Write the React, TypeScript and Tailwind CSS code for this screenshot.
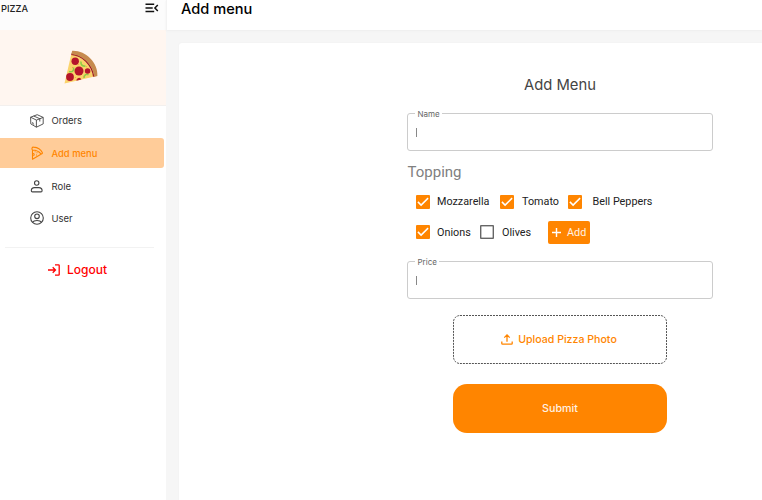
import React from "react";

type IconProps = { className?: string };

const PizzaLogo = ({ className }: IconProps) => (
  <svg className={className} width="36" height="36" viewBox="0 0 36 36" fill="none">
    <path d="M8.2 4.5C19 5.5 28.5 15 30.5 26.8L1.500 33.500Z" fill="#fbd36b" />
    <path d="M8.3 4.2C19.5 5 29 14.5 30.8 26.6" stroke="#9d1422" strokeWidth="1.5" />
    <path d="M9.2.8C22.5.2 35.2 12.5 34.400 26l-3.200.9C30 15 20 5 8.2 4.2Z" fill="#c68a4e" />
    <path d="M18 11.5c-.5 3 1.5 5 4.500 4.500M10.500 17.500c.8 3-1 5-4.500 4M21 28c0-3 2-4.500 4.500-3.200" stroke="#8fce45" strokeWidth="1.6" />
    <circle cx="12.200" cy="11.300" r="3.700" fill="#b5152b" />
    <circle cx="16" cy="21" r="4.500" fill="#b5152b" />
    <circle cx="24.600" cy="21" r="2.800" fill="#b5152b" />
    <circle cx="7" cy="27" r="3.900" fill="#b5152b" />
    <path d="M13.400 30.700a2.600 2.600 0 0 1 5-1.200Z" fill="#b5152b" />
    <path d="m9 17 .8.8M20 26l.8.5M23 17l.7-.5M12 28l.6-.8M15 15l.5-.7" stroke="#f59b35" />
  </svg>
);

const MenuFold = () => (
  <svg width="14" height="10" viewBox="0 0 14 10" fill="none" stroke="#111" strokeWidth="1.5">
    <path d="M.5 1.250h8.700M.5 4.900h7.200M.5 8.600h8.700M12.800 2 9.900 4.900l2.900 3" />
  </svg>
);

const BoxIcon = () => (
  <svg width="14" height="14" viewBox="0 0 14 14" fill="none" stroke="#444" strokeWidth="0.9" strokeLinejoin="round">
    <path d="M.6 3.200 7.200.7l6 2.700v6.500L6.400 13.200.8 9.900ZM.6 3.200l5.800 2.900 6.800-2.700M6.400 6.100v7.100M3.700 2 9.800 4.700v2.800M2.700 8.200v1.300l1.400.8" />
  </svg>
);

const SliceIcon = () => (
  <svg width="14" height="14" viewBox="0 0 14 14" fill="none" stroke="#ff8500" strokeWidth="1.100" strokeLinejoin="round">
    <path d="M2.500 4v9.200l9.300-5.500M2.500 4C1.400 3 1.900.9 3.600 1.100c4.200.4 7.400 2.700 8.700 5.300.5 1.200-.4 1.800-1.400 1.400C9.100 5.500 6.300 4.200 2.500 4Z" />
    <path d="M2.700 7.500c1.500-.2 2.200 1.500.6 2.300M6.500 6.800h1M4.700 5.700h.8M6 9h1" />
  </svg>
);

const RoleIcon = () => (
  <svg width="14" height="13" viewBox="0 0 14 13" fill="none" stroke="#444" strokeWidth="1.100">
    <circle cx="6.700" cy="3" r="2.200" />
    <path d="M1.300 10.800c0-2.200 1.500-3.200 3.200-3.200h4.400c1.800 0 3.200 1 3.200 3.200 0 .7-.5 1.100-1.100 1.100H2.400c-.6 0-1.100-.4-1.100-1.100Z" />
  </svg>
);

const UserIcon = () => (
  <svg width="14" height="14" viewBox="0 0 14 14" fill="none" stroke="#444" strokeWidth="1.100">
    <circle cx="7" cy="7" r="6.300" />
    <circle cx="7" cy="5.300" r="2.300" />
    <path d="M2.600 11.300C3.400 9.800 5 9.500 7 9.500s3.600.3 4.400 1.800" />
  </svg>
);

const LogoutIcon = () => (
  <svg width="12" height="12" viewBox="0 0 12 12" fill="none" stroke="#f00" strokeWidth="1.300">
    <path d="M0 6h7.400M4.700 3.200 7.500 6 4.700 8.800M7 .8h3.500q.7 0 .7.7v9q0 .7-.7.7H7" />
  </svg>
);

const UploadIcon = () => (
  <svg width="12" height="11" viewBox="0 0 12 11" fill="none" stroke="#ff8500" strokeWidth="1.300">
    <path d="M6 7.700V1.100M3.300 3.600 6 .9l2.700 2.700M.8 7.400v2q0 .7.700.7h9q.7 0 .7-.7v-2" />
  </svg>
);

const Checkbox = ({ checked = true }: { checked?: boolean }) => (
  <span className={`flex h-3.5 w-3.5 shrink-0 items-center justify-center rounded-[1px] ${checked ? "bg-[#ff8500]" : "bg-[#666]"}`}>
    {checked ? (
      <svg width="12" height="10" viewBox="0 0 12 10" fill="none" stroke="white" strokeWidth="1.500">
        <path d="m.9 4.900 3.200 3.200 7-7" />
      </svg>
    ) : (
      <svg width="14" height="14" viewBox="0 0 14 14"><path d="M1.400 1.400h11.200v11.200H1.400z" fill="white" /></svg>
    )}
  </span>
);

const NavItem = ({ icon, label, className = "" }: { icon: React.ReactNode; label: string; className?: string }) => (
  <div className={`flex items-center pl-[30px] ${className}`}>
    <span className="flex w-[21.500px] shrink-0">{icon}</span>
    <span className="pt-[2px]">{label}</span>
  </div>
);

const Field = ({ label }: { label: string }) => (
  <div className="relative flex h-[38px] w-[306px] items-center rounded-[3px] border border-[#ccc] pl-2">
    <span className="absolute -top-[6px] left-[7px] bg-white px-[2.500px] text-[8px] leading-[12px] text-[#666]">{label}</span>
    <span className="h-[9px] w-px bg-[#888]" />
  </div>
);

export default function App() {
  return (
    <div className="flex h-[500px] w-[762px] overflow-hidden bg-[#f6f6f6] font-['Inter',sans-serif]">
      <aside className="h-full w-[166px] shrink-0 bg-white">
        <div className="flex h-[30px] justify-between bg-[#fcfcfc] pl-px pr-[7px]">
          <span className="pt-[3px] text-[9.300px] leading-[12px] font-medium text-[#222]">PIZZA</span>
          <span className="pt-[2.500px]"><MenuFold /></span>
        </div>
        <div className="h-[76px] border-b border-[#f3f0ee] bg-[#fff6f0] pt-5 pl-[62.500px]">
          <PizzaLogo />
        </div>
        <nav className="text-[9.500px] text-[#333]">
          <NavItem icon={<BoxIcon />} label="Orders" className="h-[29px]" />
          <div className="pt-[3px]">
            <NavItem icon={<SliceIcon />} label="Add menu" className="h-[30px] w-[164px] rounded-r-[3px] bg-[#ffcc99] text-[9.400px] font-medium text-[#ff8500]" />
          </div>
          <NavItem icon={<RoleIcon />} label="Role" className="mt-[2px] h-[32px]" />
          <NavItem icon={<UserIcon />} label="User" className="h-[32px]" />
        </nav>
        <div className="mt-[13px] ml-[5px] w-[149px] border-t border-[#f2f2f2]" />
        <div className="mt-[13px] flex h-[18px] items-center pl-12 text-[12px] font-medium text-[#f00]">
          <LogoutIcon />
          <span className="ml-[7px]">Logout</span>
        </div>
      </aside>
      <main className="flex h-full min-w-0 flex-1 flex-col">
        <header className="h-[30px] shrink-0 border-l border-[#f3f3f3] bg-white pl-[14px] shadow-[0_1px_2px_#eeeeee]">
          <h1 className="pt-px text-[14.600px] leading-[17px] font-medium text-black">Add menu</h1>
        </header>
        <section className="mt-[13px] ml-[13px] flex-1 rounded-tl-[3px] bg-white pl-[228px] shadow-[0_0_2px_#eeeeee]">
          <div className="w-[306px]">
            <h2 className="h-[70px] pt-8 text-center text-[14.800px] leading-[20px] text-[#444]">Add Menu</h2>
            <Field label="Name" />
            <div className="font-['Roboto',sans-serif] text-[#222]">
              <h3 className="mt-[11px] pl-[0.500px] text-[15px] leading-[20px] text-[#808080]">Topping</h3>
              <div className="mt-[10px] flex h-[20px] items-center pl-[9px] text-[10.800px]">
                <Checkbox /><span className="ml-[7px] w-[63px]">Mozzarella</span>
                <Checkbox /><span className="ml-[8px] w-[46px]">Tomato</span>
                <Checkbox /><span className="ml-[10.500px] whitespace-nowrap">Bell Peppers</span>
              </div>
              <div className="mt-[8px] flex h-[24px] items-center pl-[9px] text-[10.800px]">
                <Checkbox /><span className="ml-[7px] w-[43px] pt-[2px]">Onions</span>
                <Checkbox checked={false} /><span className="ml-[8px] w-[46px] pt-[2px]">Olives</span>
                <button className="flex h-[23px] w-[42px] items-center rounded-[2px] bg-[#ff8500] pl-[3px] text-[#fff2e5]">
                  <svg width="11" height="11" viewBox="0 0 11 11" stroke="white" strokeWidth="1.400"><path d="M1 5.500h9M5.500 1v9" /></svg>
                  <span className="ml-[5px] pt-[2px]">Add</span>
                </button>
              </div>
            </div>
            <div className="mt-[17px]"><Field label="Price" /></div>
            <div className="flex flex-col items-center">
              <button className="relative mt-4 flex h-[49px] w-[214px] items-center justify-center pr-[2px] text-[10.600px] font-medium text-[#ff8500]">
                <svg className="absolute inset-0" width="214" height="49" fill="none" stroke="#555" strokeDasharray="2 1">
                  <rect x=".5" y=".5" width="213" height="48" rx="6.500" />
                </svg>
                <UploadIcon />
                <span className="ml-[5px] pt-px">Upload Pizza Photo</span>
              </button>
              <button className="mt-5 h-[49px] w-[214px] rounded-[14px] bg-[#ff8500] pt-[2px] text-[10.700px] font-medium text-[#fff2e5]">Submit</button>
            </div>
          </div>
        </section>
      </main>
    </div>
  );
}
